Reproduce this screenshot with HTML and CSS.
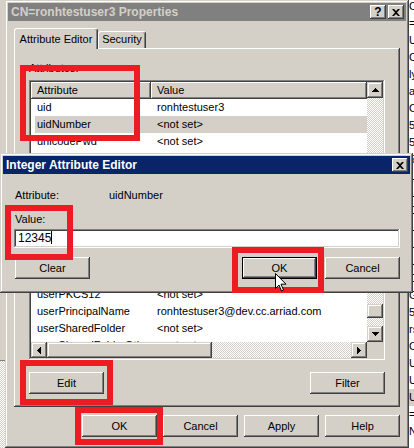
FILE: index.html
```html
<!DOCTYPE html>
<html lang="en">
<head>
  <meta charset="UTF-8">
  <title>CN=ronhtestuser3 Properties</title>
  <link rel="stylesheet" href="styles.css">
</head>
<body>

  <div class="desk">
    <div class="strip-left">
      <div class="strip-top"></div>
      <div class="strip-dither"></div>
    </div>

    <div class="window">
      <div class="titlebar inactive">
        <span class="title">CN=ronhtestuser3 Properties</span>
        <div class="tbtns">
          <div class="tbtn help">?</div>
          <div class="tbtn">
            <svg width="8" height="7" viewBox="0 0 8 7"><path d="M0 0h2l2 2 2-2h2L5 3.5 8 7H6L4 5 2 7H0l3-3.5z"/></svg>
          </div>
        </div>
      </div>

      <div class="win-body">
        <div class="tabs">
          <div class="tab active">Attribute Editor</div>
          <div class="tab">Security</div>
        </div>

        <div class="panel">
          <div class="label">Attributes:</div>

          <div class="listview">
            <div class="lv-area">
              <div class="lv-head">
                <div class="hcell h1">Attribute</div>
                <div class="hcell h2">Value</div>
              </div>
              <div class="lv-rows">
                <div class="row"><span class="c1">uid</span><span class="c2">ronhtestuser3</span></div>
                <div class="row sel"><span class="c1">uidNumber</span><span class="c2">&lt;not set&gt;</span></div>
                <div class="row"><span class="c1">unicodePwd</span><span class="c2">&lt;not set&gt;</span></div>
                <div class="row"><span class="c1">unixHomeDirectory</span><span class="c2">&lt;not set&gt;</span></div>
                <div class="row"><span class="c1">unixUserPassword</span><span class="c2">&lt;not set&gt;</span></div>
                <div class="row"><span class="c1">url</span><span class="c2">&lt;not set&gt;</span></div>
                <div class="row"><span class="c1">userAccountControl</span><span class="c2">0x200 = ( NORMAL_ACCOUNT )</span></div>
                <div class="row"><span class="c1">userCert</span><span class="c2">&lt;not set&gt;</span></div>
                <div class="row"><span class="c1">userCertificate</span><span class="c2">&lt;not set&gt;</span></div>
                <div class="row"><span class="c1">userParameters</span><span class="c2">&lt;not set&gt;</span></div>
                <div class="row"><span class="c1">userPassword</span><span class="c2">&lt;not set&gt;</span></div>
                <div class="row"><span class="c1">userPKCS12</span><span class="c2">&lt;not set&gt;</span></div>
                <div class="row"><span class="c1">userPrincipalName</span><span class="c2">ronhtestuser3@dev.cc.arriad.com</span></div>
                <div class="row"><span class="c1">userSharedFolder</span><span class="c2">&lt;not set&gt;</span></div>
                <div class="row"><span class="c1">userSharedFolderOther</span><span class="c2">&lt;not set&gt;</span></div>
              </div>
            </div>

            <div class="vscroll">
              <div class="sb-btn">
                <svg width="7" height="4" viewBox="0 0 7 4"><path d="M3 0h1v1h1v1h1v1h1v1H0V3h1V2h1V1h1z"/></svg>
              </div>
              <div class="track vtrack">
                <div class="thumb vthumb"></div>
              </div>
              <div class="sb-btn">
                <svg width="7" height="4" viewBox="0 0 7 4"><path d="M0 0h7v1H6v1H5v1H4v1H3V3H2V2H1V1H0z"/></svg>
              </div>
            </div>

            <div class="hscroll">
              <div class="sb-btn">
                <svg width="4" height="7" viewBox="0 0 4 7"><path d="M3 0h1v7H3V6H2V5H1V4H0V3h1V2h1V1h1z"/></svg>
              </div>
              <div class="thumb hthumb"></div>
              <div class="track htrack"></div>
              <div class="sb-btn">
                <svg width="4" height="7" viewBox="0 0 4 7"><path d="M0 0h1v1h1v1h1v1h1v1H3v1H2v1H1v1H0z"/></svg>
              </div>
            </div>

            <div class="corner"></div>
          </div>

          <div class="panel-btns">
            <div class="btn">Edit</div>
            <div class="btn">Filter</div>
          </div>
        </div>

        <div class="dlg-btns">
          <div class="btn">OK</div>
          <div class="btn">Cancel</div>
          <div class="btn">Apply</div>
          <div class="btn">Help</div>
        </div>
      </div>
    </div>

    <div class="strip-right">
      <div>CN</div><div>=l</div><div>U</div><div>Cl</div><div>ly</div><div>ar</div>
      <div>C</div><div>56</div><div>56</div><div>56</div><div>U</div><div>U</div>
      <div>C</div><div>U</div><div>U</div><div>U</div><div>C</div><div>G</div>
      <div>5,</div><div>rs</div><div>Co</div><div>U</div><div>U</div>
      <div class="hl">U</div><div>=</div><div>N</div>
    </div>
  </div>

  <!-- Integer editor opened over the properties window -->
  <div class="dialog">
    <div class="titlebar active">
      <span class="title">Integer Attribute Editor</span>
      <div class="tbtns">
        <div class="tbtn">
          <svg width="8" height="7" viewBox="0 0 8 7"><path d="M0 0h2l2 2 2-2h2L5 3.5 8 7H6L4 5 2 7H0l3-3.5z"/></svg>
        </div>
      </div>
    </div>
    <div class="dlg-content">
      <div class="info">
        <span>Attribute:</span>
        <span>uidNumber</span>
      </div>
      <div class="value-label">Value:</div>
      <div class="field">12345<span class="caret"></span></div>
      <div class="dlg-row">
        <div class="btn clear">Clear</div>
        <div class="btn default">OK</div>
        <div class="btn">Cancel</div>
      </div>
    </div>
  </div>

  <!-- red highlight marks -->
  <div class="mark m1"></div>
  <div class="mark m2"></div>
  <div class="mark m3"></div>
  <div class="mark m4"></div>
  <div class="mark m5"></div>

  <svg class="cursor" width="12" height="19" viewBox="0 0 12 19">
    <path d="M0.5 0.5v15l3.5-3.5 2.5 6 2-1-2.5-5.8h5z" fill="#fff" stroke="#000" stroke-width="1"/>
  </svg>

</body>
</html>
```

FILE: styles.css
```css
* {
  box-sizing: border-box;
}

body {
  margin: 0;
  width: 414px;
  height: 448px;
  overflow: hidden;
  position: relative;
  background: #d4d0c8;
  font-family: "Liberation Sans", Arial, sans-serif;
  font-size: 11px;
  color: #000;
}

.desk {
  display: flex;
  height: 448px;
}

/* background windows peeking out on both sides */
.strip-left {
  width: 5px;
  display: flex;
  flex-direction: column;
}

.strip-top {
  height: 361px;
  background: #d4d0c8;
  border-bottom: 1px solid #808080;
}

.strip-dither {
  flex: 1;
  background: repeating-conic-gradient(#fff 0 25%, #d4d0c8 0 50%) 0 0 / 2px 2px;
}

.strip-right {
  width: 5px;
  background: #fff;
  overflow: hidden;
  white-space: nowrap;
  line-height: 17px;
  margin-top: -2px;
}

.strip-right .hl {
  background: #d4d0c8;
}

/* windows */
.window {
  width: 404px;
  height: 448px;
  padding: 3px;
  background: #d4d0c8;
  box-shadow: inset -1px -1px #404040, inset 1px 1px #d4d0c8, inset -2px -2px #808080, inset 2px 2px #fff;
  display: flex;
  flex-direction: column;
}

.titlebar {
  height: 18px;
  display: flex;
  align-items: center;
  padding: 0 2px 0 3px;
}

.titlebar.inactive {
  background: #808080;
  color: #d4d0c8;
}

.titlebar.active {
  background: #0a246a;
  color: #fff;
}

.title {
  flex: 1;
  font-size: 12px;
  font-weight: bold;
  white-space: nowrap;
}

.tbtns {
  display: flex;
  gap: 2px;
}

.tbtn {
  width: 16px;
  height: 14px;
  display: flex;
  align-items: center;
  justify-content: center;
  background: #d4d0c8;
  color: #000;
  box-shadow: inset -1px -1px #404040, inset 1px 1px #fff, inset -2px -2px #808080, inset 2px 2px #d4d0c8;
}

.tbtn.help {
  font-size: 12px;
  font-weight: bold;
  line-height: 14px;
}

.win-body {
  padding: 7px 6px 0 6px;
}

/* tabs */
.tabs {
  display: flex;
  align-items: flex-end;
  height: 20px;
  position: relative;
  z-index: 1;
}

.tab {
  height: 17px;
  line-height: 15px;
  text-align: center;
  background: #d4d0c8;
  border-top: 1px solid #fff;
  border-left: 1px solid #fff;
  border-right: 1px solid #404040;
  border-radius: 3px 3px 0 0;
  box-shadow: inset -1px 0 #808080;
  width: 48px;
}

.tab.active {
  width: 84px;
  height: 21px;
  line-height: 20px;
  margin-bottom: -1px;
}

.panel {
  height: 359px;
  padding: 13px 15px 0;
  box-shadow: inset -1px -1px #404040, inset 1px 1px #fff, inset -2px -2px #808080;
}

.label {
  line-height: 14px;
  margin-bottom: 5px;
}

/* list view */
.listview {
  width: 356px;
  height: 280px;
  padding: 2px;
  background: #fff;
  box-shadow: inset -1px -1px #fff, inset 1px 1px #808080, inset -2px -2px #d4d0c8, inset 2px 2px #404040;
  display: grid;
  grid-template-columns: 336px 16px;
  grid-template-rows: 260px 16px;
}

.lv-area {
  overflow: hidden;
}

.lv-head {
  display: flex;
  height: 17px;
}

.hcell {
  height: 17px;
  line-height: 16px;
  padding-left: 6px;
  background: #d4d0c8;
  box-shadow: inset -1px -1px #404040, inset 1px 1px #fff, inset -2px -2px #808080;
}

.h1 {
  width: 120px;
}

.h2 {
  flex: 1;
}

.row {
  display: flex;
  height: 17px;
  line-height: 17px;
  margin-left: 4px;
  white-space: nowrap;
}

.row.sel {
  background: #d4d0c8;
}

.c1 {
  width: 116px;
  flex: none;
  padding-left: 2px;
}

.c2 {
  padding-left: 6px;
}

/* scroll bars */
.vscroll {
  display: flex;
  flex-direction: column;
}

.hscroll {
  display: flex;
}

.sb-btn {
  width: 16px;
  height: 16px;
  flex: none;
  display: flex;
  align-items: center;
  justify-content: center;
  background: #d4d0c8;
  box-shadow: inset -1px -1px #404040, inset 1px 1px #d4d0c8, inset -2px -2px #808080, inset 2px 2px #fff;
}

.track {
  flex: 1;
  background: repeating-conic-gradient(#fff 0 25%, #d4d0c8 0 50%) 0 0 / 2px 2px;
}

.vtrack {
  display: flex;
  flex-direction: column;
  justify-content: flex-end;
  padding-bottom: 8px;
}

.thumb {
  background: #d4d0c8;
  box-shadow: inset -1px -1px #404040, inset 1px 1px #d4d0c8, inset -2px -2px #808080, inset 2px 2px #fff;
}

.vthumb {
  height: 14px;
}

.hthumb {
  width: 165px;
  flex: none;
}

.corner {
  background: #d4d0c8;
}

/* buttons */
.btn {
  width: 75px;
  height: 22px;
  line-height: 22px;
  text-align: center;
  background: #d4d0c8;
  box-shadow: inset -1px -1px #404040, inset 1px 1px #fff, inset -2px -2px #808080, inset 2px 2px #d4d0c8;
}

.btn.default {
  box-shadow: inset 0 0 0 1px #000, inset -2px -2px #404040, inset 2px 2px #fff, inset -3px -3px #808080;
}

.panel-btns {
  display: flex;
  justify-content: space-between;
  margin-top: 12px;
}

.dlg-btns {
  display: flex;
  justify-content: flex-end;
  gap: 6px;
  margin-top: 8px;
}

/* integer editor */
.dialog {
  position: absolute;
  left: 0;
  top: 153px;
  width: 413px;
  height: 140px;
  padding: 3px;
  background: #d4d0c8;
  box-shadow: inset -1px -1px #404040, inset 1px 1px #d4d0c8, inset -2px -2px #808080, inset 2px 2px #fff;
  z-index: 2;
}

.dlg-content {
  padding: 14px 10px 0 11px;
}

.info {
  display: grid;
  grid-template-columns: 94px auto;
  line-height: 14px;
  padding-left: 1px;
}

.value-label {
  margin-top: 10px;
  line-height: 14px;
  padding-left: 1px;
}

.field {
  margin-top: 3px;
  height: 19px;
  line-height: 19px;
  padding: 0 4px;
  background: #fff;
  box-shadow: inset -1px -1px #fff, inset 1px 1px #808080, inset -2px -2px #d4d0c8, inset 2px 2px #404040;
  font-size: 12px;
}

.caret {
  display: inline-block;
  width: 1px;
  height: 13px;
  background: #000;
  vertical-align: -2px;
}

.dlg-row {
  display: flex;
  gap: 8px;
  margin-top: 9px;
}

.clear {
  margin-left: 1px;
  margin-right: auto;
}

/* annotation marks */
.mark {
  position: absolute;
  border: 6px solid #ed1c24;
  z-index: 3;
}

.m1 { left: 20px; top: 65px; width: 120px; height: 76px; }
.m2 { left: 5px; top: 205px; width: 68px; height: 55px; }
.m3 { left: 232px; top: 247px; width: 92px; height: 46px; }
.m4 { left: 20px; top: 360px; width: 93px; height: 45px; }
.m5 { left: 75px; top: 407px; width: 88px; height: 38px; }

.cursor {
  position: absolute;
  left: 275px;
  top: 273px;
  z-index: 4;
}
```
